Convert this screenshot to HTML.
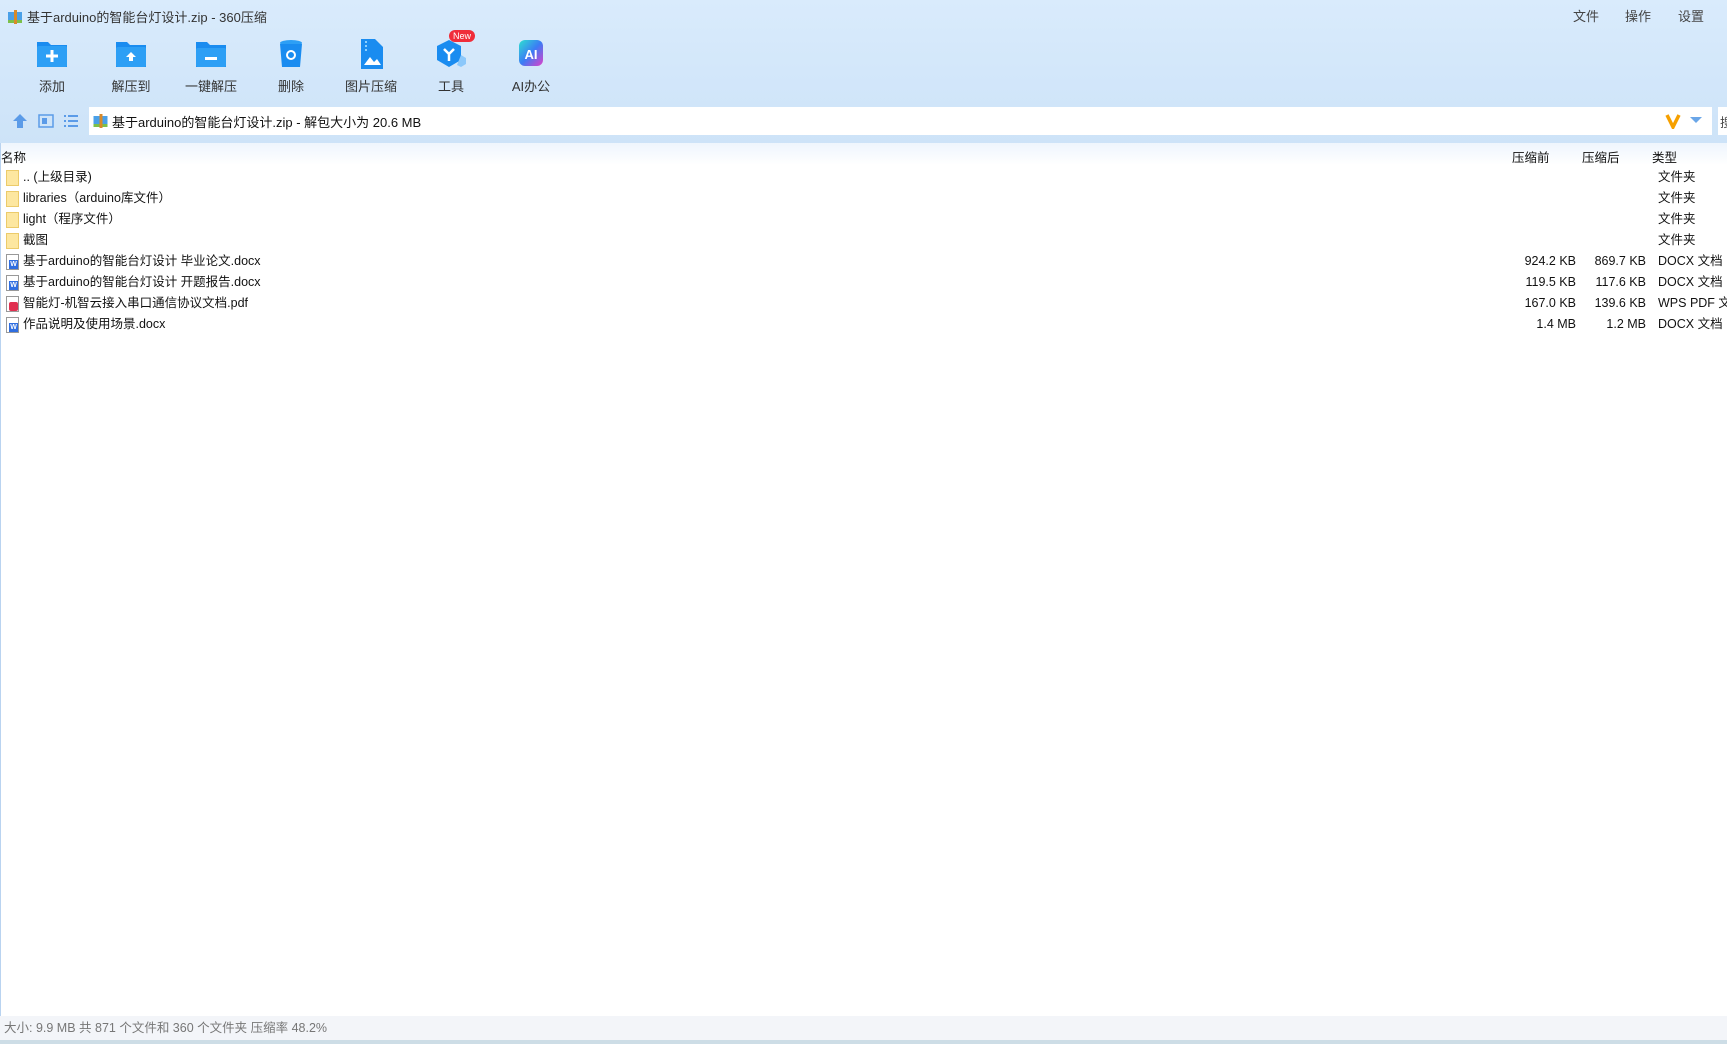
<!DOCTYPE html>
<html><head><meta charset="utf-8">
<style>
*{margin:0;padding:0;box-sizing:border-box}
body{width:1727px;height:1044px;overflow:hidden;position:relative;background:#fff;font-family:"Liberation Sans","Noto Sans CJK SC",sans-serif;font-size:12.5px;color:#111}
.top{position:absolute;left:0;top:0;width:1727px;height:143px;background:linear-gradient(#d9ebfc,#cde3f8);}
.title{position:absolute;left:8px;top:7px;font-size:13px;color:#333;display:flex;align-items:center}
.menu{position:absolute;top:6px;font-size:13px;color:#444}
.tb{position:absolute;top:38px;width:70px;text-align:center;font-size:13px;color:#333}
.tb .ic{width:32px;height:32px;margin:0 auto 6px;position:relative}
.addr{position:absolute;left:89px;top:107px;width:1623px;height:28px;background:#fff;display:flex;align-items:center;padding-left:4px;font-size:13px}
.search{position:absolute;left:1718px;top:107px;width:20px;height:28px;background:#fff}
.hdr{position:absolute;left:0;top:143px;width:1727px;height:22px;background:linear-gradient(#eef5fd,#fff)}
.row{position:absolute;left:0;height:21px;width:1727px;line-height:21px}
.row .n{position:absolute;left:23px}
.row .fi{position:absolute;left:6px;top:3px;width:13px;height:16px}
.c1{position:absolute;right:151px;text-align:right}
.c2{position:absolute;right:81px;text-align:right}
.c3{position:absolute;left:1658px;white-space:nowrap}
.status{position:absolute;left:0;top:1016px;width:1727px;height:24px;background:#f3f5f9;color:#777;font-size:12.5px;line-height:24px;padding-left:4px}
.strip{position:absolute;left:0;top:1040px;width:1727px;height:4px;background:#cddde6}
.lb{position:absolute;left:0;top:143px;width:1px;height:873px;background:#b9d3f0}
</style></head><body>
<div class="top"></div>
<div class="title"><svg width="14" height="14" viewBox="0 0 14 14"><rect x="0" y="2" width="14" height="11" fill="#4aa0e8"/><rect x="0" y="10" width="14" height="3" fill="#7cc04a"/><rect x="6" y="0" width="3" height="14" fill="#d88a2a"/></svg><span style="margin-left:5px">基于arduino的智能台灯设计.zip - 360压缩</span></div>
<div class="menu" style="left:1573px">文件</div>
<div class="menu" style="left:1625px">操作</div>
<div class="menu" style="left:1678px">设置</div>

<div class="tb" style="left:17px"><div class="ic"><svg width="32" height="32"><path d="M1 4h11l3 3h16v22H1z" fill="#1a8cf0"/><rect x="1" y="8" width="30" height="21" rx="2" fill="#2d9ff5"/><path d="M16 12v12M10 18h12" stroke="#fff" stroke-width="3"/></svg></div>添加</div>
<div class="tb" style="left:96px"><div class="ic"><svg width="32" height="32"><path d="M1 4h11l3 3h16v22H1z" fill="#1a8cf0"/><rect x="1" y="9" width="30" height="20" rx="2" fill="#2d9ff5"/><path d="M16 14l-5 5h3v4h4v-4h3z" fill="#fff"/></svg></div>解压到</div>
<div class="tb" style="left:176px"><div class="ic"><svg width="32" height="32"><path d="M1 4h11l3 3h16v22H1z" fill="#1a8cf0"/><rect x="1" y="10" width="30" height="19" rx="2" fill="#2d9ff5"/><rect x="10" y="19" width="12" height="3" fill="#fff"/></svg></div>一键解压</div>
<div class="tb" style="left:256px"><div class="ic"><svg width="32" height="32"><ellipse cx="16" cy="5" rx="11" ry="3" fill="#2d9ff5"/><path d="M5 6h22l-2 23H7z" fill="#1a8cf0"/><circle cx="16" cy="17" r="4" fill="none" stroke="#fff" stroke-width="2"/></svg></div>删除</div>
<div class="tb" style="left:336px"><div class="ic"><svg width="32" height="32"><path d="M6 1h14l8 8v22H6z" fill="#1a8cf0"/><path d="M9 27l6-8 4 5 3-3 4 6z" fill="#fff"/><path d="M10 3h2v2h-2zM10 7h2v2h-2zM10 11h2v2h-2z" fill="#8cd0ff"/></svg></div>图片压缩</div>
<div class="tb" style="left:416px"><div class="ic"><svg width="32" height="32"><path d="M14 2l12 6v14l-12 7-12-7V8z" fill="#1a8cf0"/><path d="M26 17l5 3v6l-5 3-4-2z" fill="#8cc8fa"/><path d="M9 11l5 5 5-5M14 16v7" stroke="#fff" stroke-width="2.5" fill="none"/></svg><div style="position:absolute;left:14px;top:-8px;background:#f02d3a;color:#fff;font-size:9px;line-height:12px;border-radius:6px;padding:0 4px">New</div></div>工具</div>
<div class="tb" style="left:496px"><div class="ic"><svg width="32" height="32"><defs><linearGradient id="g" x1="0" y1="0" x2="1" y2="1"><stop offset="0" stop-color="#2ee0d0"/><stop offset=".5" stop-color="#3b7cf5"/><stop offset="1" stop-color="#e040c8"/></linearGradient></defs><rect x="4" y="2" width="24" height="26" rx="6" fill="url(#g)"/><text x="16" y="21" font-size="13" font-weight="bold" fill="#fff" text-anchor="middle" font-family="Liberation Sans">AI</text></svg></div>AI办公</div>

<svg style="position:absolute;left:12px;top:113px" width="16" height="16"><path d="M8 1l7 7h-4v7H5V8H1z" fill="#5b9be8"/></svg>
<svg style="position:absolute;left:38px;top:113px" width="16" height="16"><rect x="1" y="2" width="14" height="12" fill="none" stroke="#5b9be8" stroke-width="1.5"/><rect x="4" y="5" width="5" height="6" fill="#5b9be8"/></svg>
<svg style="position:absolute;left:63px;top:113px" width="16" height="16"><path d="M1 3h2M1 8h2M1 13h2M5 3h10M5 8h10M5 13h10" stroke="#5b9be8" stroke-width="2"/></svg>
<div class="addr"><svg width="15" height="14" viewBox="0 0 14 14"><rect x="0" y="2" width="14" height="11" fill="#4aa0e8"/><rect x="0" y="10" width="14" height="3" fill="#7cc04a"/><rect x="6" y="0" width="3" height="14" fill="#d88a2a"/></svg><span style="margin-left:4px">基于arduino的智能台灯设计.zip - 解包大小为 20.6 MB</span>
<svg style="position:absolute;left:1576px;top:6px" width="16" height="16"><path d="M2 2l6 12 6-12" stroke="#f6a000" stroke-width="3.5" fill="none"/></svg>
<svg style="position:absolute;left:1601px;top:10px" width="12" height="8"><path d="M0 0h12L6 6z" fill="#6aa6e8"/></svg></div>
<div class="search"><span style="color:#444;position:absolute;left:2px;top:5px">搜</span></div>

<div class="hdr"><span style="position:absolute;left:1px;top:4px">名称</span><span style="position:absolute;left:1512px;top:4px">压缩前</span><span style="position:absolute;left:1582px;top:4px">压缩后</span><span style="position:absolute;left:1652px;top:4px">类型</span></div>
<div class="lb"></div>

<div class="row" style="top:167px"><div class="fi" style="background:#fde7a0;border:1px solid #eccb6a"></div><span class="n">.. (上级目录)</span><span class="c3">文件夹</span></div>
<div class="row" style="top:188px"><div class="fi" style="background:#fde7a0;border:1px solid #eccb6a"></div><span class="n">libraries（arduino库文件）</span><span class="c3">文件夹</span></div>
<div class="row" style="top:209px"><div class="fi" style="background:#fde7a0;border:1px solid #eccb6a"></div><span class="n">light（程序文件）</span><span class="c3">文件夹</span></div>
<div class="row" style="top:230px"><div class="fi" style="background:#fde7a0;border:1px solid #eccb6a"></div><span class="n">截图</span><span class="c3">文件夹</span></div>
<div class="row" style="top:251px"><div class="fi" style="border:1px solid #999;background:#fff"><div style="position:absolute;left:2px;top:5px;width:9px;height:9px;background:#2f6ee0;color:#fff;font-size:7px;line-height:9px;text-align:center;font-weight:bold">W</div></div><span class="n">基于arduino的智能台灯设计 毕业论文.docx</span><span class="c1">924.2 KB</span><span class="c2">869.7 KB</span><span class="c3">DOCX 文档</span></div>
<div class="row" style="top:272px"><div class="fi" style="border:1px solid #999;background:#fff"><div style="position:absolute;left:2px;top:5px;width:9px;height:9px;background:#2f6ee0;color:#fff;font-size:7px;line-height:9px;text-align:center;font-weight:bold">W</div></div><span class="n">基于arduino的智能台灯设计 开题报告.docx</span><span class="c1">119.5 KB</span><span class="c2">117.6 KB</span><span class="c3">DOCX 文档</span></div>
<div class="row" style="top:293px"><div class="fi" style="border:1px solid #999;background:#fff"><div style="position:absolute;left:2px;top:5px;width:9px;height:9px;background:#e03050;border-radius:2px"></div></div><span class="n">智能灯-机智云接入串口通信协议文档.pdf</span><span class="c1">167.0 KB</span><span class="c2">139.6 KB</span><span class="c3">WPS PDF 文档</span></div>
<div class="row" style="top:314px"><div class="fi" style="border:1px solid #999;background:#fff"><div style="position:absolute;left:2px;top:5px;width:9px;height:9px;background:#2f6ee0;color:#fff;font-size:7px;line-height:9px;text-align:center;font-weight:bold">W</div></div><span class="n">作品说明及使用场景.docx</span><span class="c1">1.4 MB</span><span class="c2">1.2 MB</span><span class="c3">DOCX 文档</span></div>

<div class="status">大小: 9.9 MB 共 871 个文件和 360 个文件夹 压缩率 48.2%</div>
<div class="strip"></div>
</body></html>
